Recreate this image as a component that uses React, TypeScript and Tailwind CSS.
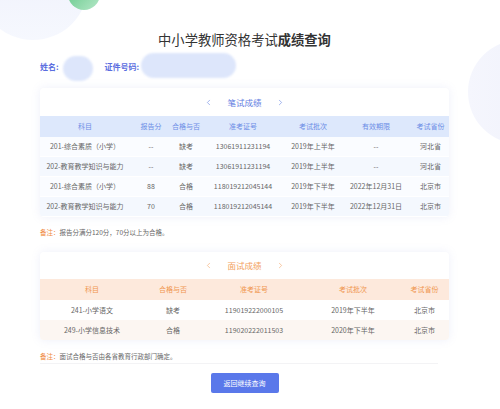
import { ChevronLeft, ChevronRight } from "lucide-react";

const WRITTEN = [
  ["201-综合素质（小学）", "--", "缺考", "13061911231194", "2019年上半年", "--", "河北省"],
  ["202-教育教学知识与能力", "--", "缺考", "13061911231194", "2019年上半年", "--", "河北省"],
  ["201-综合素质（小学）", "88", "合格", "118019212045144", "2019年下半年", "2022年12月31日", "北京市"],
  ["202-教育教学知识与能力", "70", "合格", "118019212045144", "2019年下半年", "2022年12月31日", "北京市"],
];

const INTERVIEW = [
  ["241-小学语文", "缺考", "119019222000105", "2019年下半年", "北京市"],
  ["249-小学信息技术", "合格", "119020222011503", "2020年下半年", "北京市"],
];

const WRITTEN_HEAD = ["科目", "报告分", "合格与否", "准考证号", "考试批次", "有效期限", "考试省份"];
const INTERVIEW_HEAD = ["科目", "合格与否", "准考证号", "考试批次", "考试省份"];

function Cell({ children }: { children: React.ReactNode }) {
  return <div className="flex items-center justify-center whitespace-nowrap">{children}</div>;
}

function CardTitle({ label, color }: { label: string; color: string }) {
  return (
    <div className={`flex items-center justify-center gap-[12px] ${color}`}>
      <ChevronLeft className="h-[9px] w-[9px]" strokeWidth={1.5} />
      <span className="px-[2px] text-[8.5px]">{label}</span>
      <ChevronRight className="h-[9px] w-[9px]" strokeWidth={1.5} />
    </div>
  );
}

export default function App() {
  return (
    <div
      className="relative h-[409px] w-[500px] overflow-hidden bg-white text-[#555]"
      style={{ fontFamily: '"Noto Sans CJK SC", "Noto Sans", sans-serif' }}
    >
      {/* decorative circles */}
      <div className="absolute -left-[22px] -top-[70px] h-[110px] w-[110px] rounded-full bg-gradient-to-b from-[#eceffb] to-[#f6f8fe]" />
      <div className="absolute left-[68px] -top-[22px] h-[32px] w-[32px] rounded-full bg-gradient-to-br from-[#4fc27f] to-[#b5e8c8]" />
      <div className="absolute left-[468px] top-[40px] h-[104px] w-[104px] rounded-full bg-gradient-to-l from-[#eef0fb] to-[#f5f6fd]" />

      <div className="relative flex w-[449px] flex-col pl-[40px] pt-[31px]">
        <h1 className="text-center text-[13.3px] leading-[18px] text-[#333]">
          中小学教师资格考试<span className="font-bold">成绩查询</span>
        </h1>

        <div className="mt-[5px] flex h-[26px] items-center text-[8px] font-bold text-[#5b6ee0]">
          <span>姓名:</span>
          <div className="ml-[4px] mt-[2px] h-[25px] w-[30px] rounded-full bg-[#dde6fb] blur-[1px]" />
          <span className="ml-[12px]">证件号码:</span>
          <div className="ml-[2px] -mt-[3px] h-[25px] w-[95px] rounded-full bg-[#dde6fb] blur-[1px]" />
        </div>

        {/* written exam */}
        <div className="mt-[8px] overflow-hidden rounded-[4px] bg-white shadow-[0_0_10px_rgba(120,140,220,0.13)]">
          <div className="flex h-[28px] items-center justify-center">
            <CardTitle label="笔试成绩" color="text-[#5f7ee2]" />
          </div>
          <div className="grid h-[21px] grid-cols-[90px_42px_28px_86px_54px_72px_37px] bg-[#dde8fc] text-[7px] text-[#6c8de6]">
            {WRITTEN_HEAD.map((h) => (
              <Cell key={h}>{h}</Cell>
            ))}
          </div>
          {WRITTEN.map((row, i) => (
            <div
              key={i}
              className={`grid h-[20px] grid-cols-[90px_42px_28px_86px_54px_72px_37px] border-b border-white text-[7px] text-[#666] ${
                i % 2 === 1 ? "bg-[#f4f8fe]" : "bg-[#fafcff]"
              }`}
            >
              {row.map((c, j) => (
                <Cell key={j}>{c}</Cell>
              ))}
            </div>
          ))}
        </div>

        <p className="mt-[10px] h-[10px] text-[6.5px] leading-[10px] text-[#666]">
          <span className="text-[#f08a3c]">备注：</span>报告分满分120分，70分以上为合格。
        </p>

        {/* interview */}
        <div className="mt-[15px] overflow-hidden rounded-[4px] bg-white shadow-[0_0_10px_rgba(120,140,220,0.13)]">
          <div className="flex h-[27px] items-center justify-center">
            <CardTitle label="面试成绩" color="text-[#f3a15e]" />
          </div>
          <div className="grid h-[21px] grid-cols-[104px_58px_104px_94px_49px] bg-[#fde9dc] text-[7px] text-[#f0964f]">
            {INTERVIEW_HEAD.map((h) => (
              <Cell key={h}>{h}</Cell>
            ))}
          </div>
          {INTERVIEW.map((row, i) => (
            <div
              key={i}
              className={`grid h-[20px] grid-cols-[104px_58px_104px_94px_49px] text-[7px] text-[#666] ${
                i % 2 === 1 ? "bg-[#fcf6f2]" : "bg-white"
              }`}
            >
              {row.map((c, j) => (
                <Cell key={j}>{c}</Cell>
              ))}
            </div>
          ))}
        </div>

        <p className="mt-[11px] h-[10px] w-[398px] border-b border-[#f3f3f5] pb-[12px] text-[6.5px] leading-[10px] text-[#666]">
          <span className="text-[#f08a3c]">备注：</span>面试合格与否由各省教育行政部门确定。
        </p>

        <div className="mt-[9px] flex justify-center">
          <button className="h-[20px] w-[68px] rounded-[2px] bg-[#5a78ea] text-[7px] text-white">
            返回继续查询
          </button>
        </div>
      </div>
    </div>
  );
}
